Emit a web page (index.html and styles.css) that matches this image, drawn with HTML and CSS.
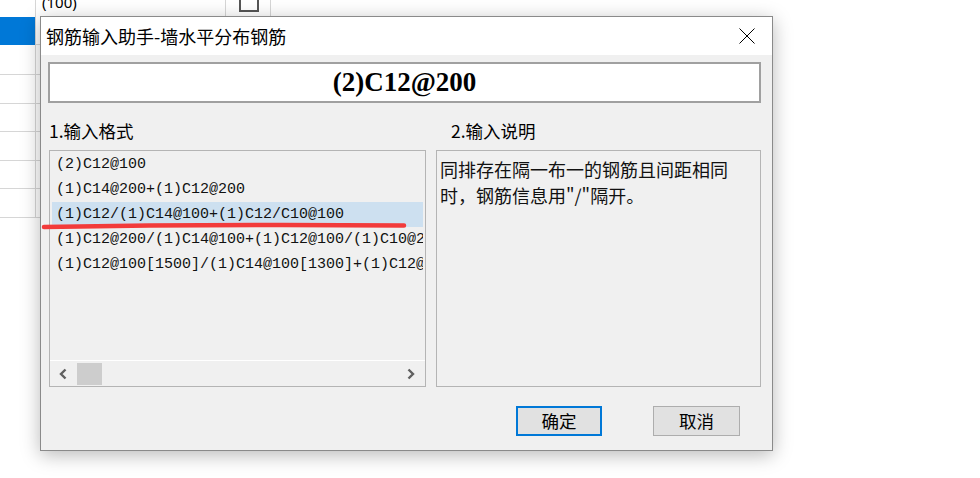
FILE: index.html
```html
<!DOCTYPE html>
<html lang="zh-CN">
<head>
<meta charset="utf-8">
<title>钢筋输入助手</title>
<link rel="stylesheet" href="styles.css">
</head>
<body>
<div class="sheet">
  <div class="srow top">
    <div class="c c0"></div>
    <div class="c c1"><span class="peek">(100)</span></div>
    <div class="c c2"><span class="chk"></span></div>
  </div>
  <div class="srow r28"><div class="c c0 sel"></div><div class="c c1"></div><div class="c c2"></div></div>
  <div class="srow r30"><div class="c c0"></div><div class="c c1"></div><div class="c c2"></div></div>
  <div class="srow r29"><div class="c c0"></div><div class="c c1"></div><div class="c c2"></div></div>
  <div class="srow r28"><div class="c c0"></div><div class="c c1"></div><div class="c c2"></div></div>
  <div class="srow r29"><div class="c c0"></div><div class="c c1"></div><div class="c c2"></div></div>
  <div class="srow r28"><div class="c c0"></div><div class="c c1"></div><div class="c c2"></div></div>
  <div class="srow r29"><div class="c c0"></div><div class="c c1"></div><div class="c c2"></div></div>
</div>

<div class="dialog">
  <div class="titlebar">
    <span class="title">钢筋输入助手-墙水平分布钢筋</span>
    <svg class="close" width="16" height="16" viewBox="0 0 16 16"><path d="M0.5 0.5 L15.5 15.5 M15.5 0.5 L0.5 15.5" stroke="#000" stroke-width="1" fill="none"/></svg>
  </div>
  <div class="client">
    <div class="entry">(2)C12@200</div>
    <div class="labels">
      <span class="label l1">1.输入格式</span>
      <span class="label l2">2.输入说明</span>
    </div>
    <div class="panels">
      <div class="list">
        <div class="items">
          <div class="item">(2)C12@100</div>
          <div class="item">(1)C14@200+(1)C12@200</div>
          <div class="item selected">(1)C12/(1)C14@100+(1)C12/C10@100</div>
          <div class="item">(1)C12@200/(1)C14@100+(1)C12@100/(1)C10@200</div>
          <div class="item">(1)C12@100[1500]/(1)C14@100[1300]+(1)C12@100[1500]</div>
        </div>
        <div class="hbar">
          <svg class="arrow" width="10" height="12" viewBox="0 0 10 12"><path d="M7.5 1.5 L3 6 L7.5 10.5" stroke="#606060" stroke-width="2.4" fill="none"/></svg>
          <span class="thumb"></span>
          <svg class="arrow right" width="10" height="12" viewBox="0 0 10 12"><path d="M2.5 1.5 L7 6 L2.5 10.5" stroke="#606060" stroke-width="2.4" fill="none"/></svg>
        </div>
      </div>
      <div class="desc">同排存在隔一布一的钢筋且间距相同<br>时，钢筋信息用"/"隔开。</div>
    </div>
    <div class="btns">
      <button class="btn primary">确定</button>
      <button class="btn">取消</button>
    </div>
  </div>
</div>

<svg class="mark" width="372" height="16" viewBox="0 0 372 16"><path d="M4 11 Q 180 8 364 9.5" stroke="#f23b3b" stroke-width="4.5" stroke-linecap="round" fill="none"/></svg>
</body>
</html>
```
FILE: styles.css
```css
html, body {
  margin: 0;
  padding: 0;
  background: #ffffff;
  font-family: "Noto Sans CJK SC", "Noto Sans", sans-serif;
  color: #000;
  overflow: hidden;
}

/* background spreadsheet */
.sheet {
  width: 271px;
}
.srow {
  display: flex;
  border-bottom: 1px solid #d6d6d6;
  box-sizing: border-box;
}
.srow.top { height: 17px; border-bottom: none; overflow: hidden; }
.srow.r28 { height: 28px; }
.srow.r29 { height: 29px; }
.srow.r30 { height: 30px; }
.c {
  box-sizing: border-box;
  border-right: 1px solid #d6d6d6;
}
.c0 { width: 36px; }
.c1 { width: 190px; }
.c2 { width: 45px; display: flex; justify-content: center; }
.c0.sel { background: #0078d7; margin-bottom: -1px; }
.peek {
  display: block;
  margin: -8px 0 0 6px;
  font: 15px "Noto Sans", sans-serif;
  line-height: 20px;
}
.chk {
  display: block;
  width: 20px;
  height: 20px;
  margin-top: -8px;
  margin-left: 1px;
  box-sizing: border-box;
  border: 2px solid #555;
}

/* dialog window */
.dialog {
  position: absolute;
  left: 40px;
  top: 16px;
  width: 733px;
  box-sizing: border-box;
  border: 1px solid #8a8a8a;
  background: #f0f0f0;
  box-shadow: 0 4px 18px rgba(0, 0, 0, 0.28);
  display: flex;
  flex-direction: column;
}
.titlebar {
  height: 38px;
  background: #fff;
  display: flex;
  align-items: center;
  padding-left: 5px;
}
.title {
  font-size: 18px;
  line-height: 20px;
}
.close {
  margin-left: auto;
  margin-right: 17px;
}
.client {
  padding: 7px 11px 14px 7px;
}
.entry {
  height: 41px;
  box-sizing: border-box;
  border: 2px solid #a0a0a0;
  background: #fff;
  display: flex;
  align-items: center;
  justify-content: center;
  font: bold 27px "Liberation Serif", serif;
}
.labels {
  display: flex;
  margin-top: 17px;
  height: 22px;
  line-height: 22px;
  font-size: 17.5px;
}
.l1 { width: 402px; padding-left: 1px; }

.panels {
  display: flex;
  gap: 10px;
  margin-top: 8px;
  padding-left: 1px;
  height: 237px;
}
.list {
  width: 377px;
  box-sizing: border-box;
  border: 1px solid #b4b4b4;
  display: flex;
  flex-direction: column;
}
.items {
  flex: 1;
  padding-top: 1px;
  overflow: hidden;
}
.item {
  font: 15px "Liberation Mono", monospace;
  height: 25px;
  line-height: 26px;
  margin: 0 2px;
  padding-left: 4px;
  white-space: nowrap;
  overflow: hidden;
  color: #111;
}
.item.selected { background: #cde0f0; }
.hbar {
  height: 26px;
  box-sizing: border-box;
  border-top: 1px solid #fff;
  display: flex;
  align-items: center;
  padding-left: 8px;
  padding-right: 9px;
}
.thumb {
  width: 25px;
  height: 22px;
  background: #cdcdcd;
  margin-left: 9px;
}
.arrow.right { margin-left: auto; }
.desc {
  width: 325px;
  box-sizing: border-box;
  border: 1px solid #b4b4b4;
  padding: 5px 3px;
  font-size: 18px;
  line-height: 26px;
  color: #111;
}
.btns {
  display: flex;
  justify-content: flex-end;
  gap: 51px;
  margin-top: 19px;
  padding-right: 21px;
}
.btn {
  font: 17.5px "Noto Sans CJK SC", sans-serif;
  width: 87px;
  height: 30px;
  box-sizing: border-box;
  background: #e1e1e1;
  border: 1px solid #adadad;
  line-height: 26px;
  padding: 0;
  color: #000;
}
.btn.primary {
  width: 86px;
  border: 2px solid #0078d7;
}

/* red hand-drawn underline over the list */
.mark {
  position: absolute;
  left: 40px;
  top: 216px;
}
```
